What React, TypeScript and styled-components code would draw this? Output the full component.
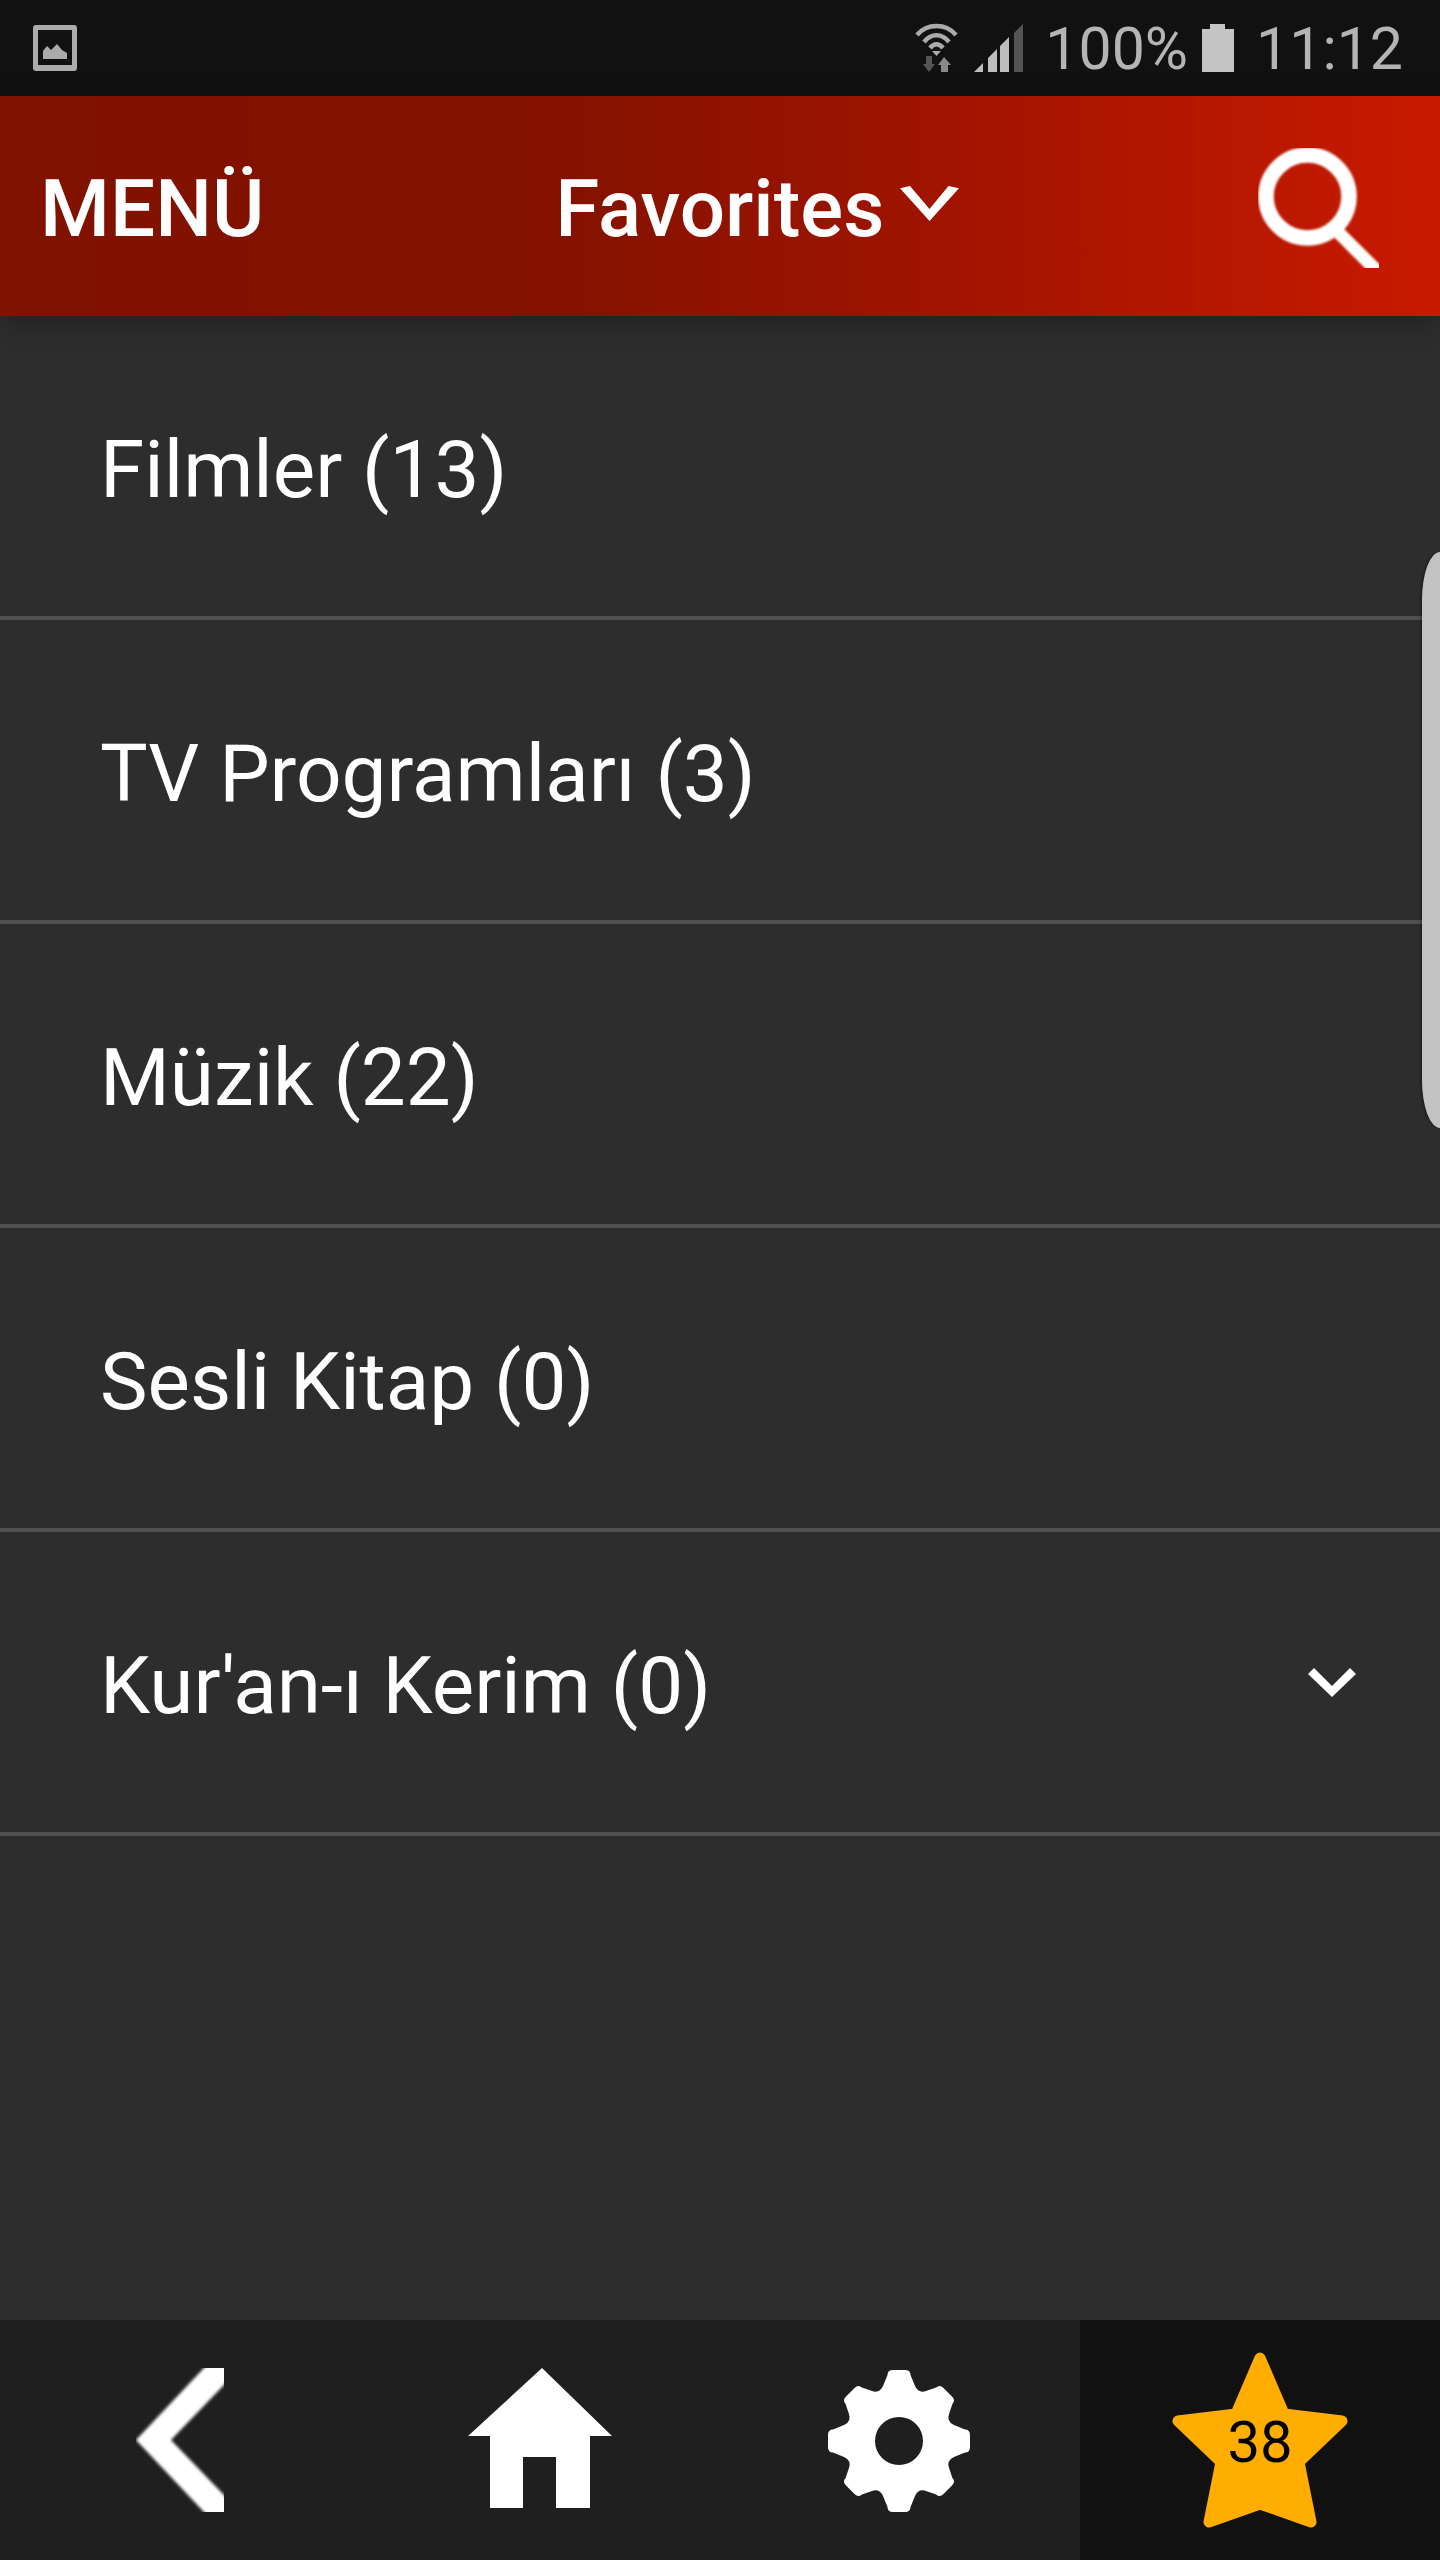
import React from "react";
import styled, { createGlobalStyle } from "styled-components";

const Global = createGlobalStyle`
  html, body { margin: 0; padding: 0; background: #2d2d2d; }
  * { box-sizing: border-box; }
`;

const Screen = styled.div`
  position: relative;
  width: 1440px;
  height: 2560px;
  display: flex;
  flex-direction: column;
  overflow: hidden;
  background: #2d2d2d;
  font-family: Roboto, "Liberation Sans", sans-serif;
  color: #fff;
`;

const StatusBar = styled.div`
  height: 96px;
  flex: none;
  background: #111;
  display: flex;
  align-items: flex-start;
  padding: 23px 37px 0 33px;
  color: #b4b4b4;
`;

const StatusIcon = styled.svg<{ $ml?: number; $mt?: number }>`
  display: block;
  flex: none;
  margin-left: ${(p) => p.$ml ?? 0}px;
  margin-top: ${(p) => p.$mt ?? 0}px;
`;

const StatusSpacer = styled.div`
  flex: 1;
`;

const StatusText = styled.span<{ $ml: number }>`
  font-size: 59px;
  font-weight: 400;
  line-height: 52px;
  margin-left: ${(p) => p.$ml}px;
  white-space: nowrap;
`;

const Header = styled.header`
  position: relative;
  z-index: 1;
  height: 220px;
  flex: none;
  display: flex;
  align-items: center;
  padding: 0 61px 0 40px;
  background: linear-gradient(90deg, #801200 0%, #851200 40%, #a01400 65%, #c81a00 100%);
  box-shadow: 0 6px 26px rgba(0, 0, 0, 0.28);
`;

const HeaderLabel = styled.span`
  font-size: 80px;
  font-weight: 500;
  line-height: 1;
  padding-top: 6px;
  white-space: nowrap;
`;

const TitleGroup = styled.div`
  display: flex;
  align-items: center;
  margin-left: 291px;
  flex: 1;
`;

const HeaderChevron = styled.svg`
  display: block;
  margin-left: 16px;
  margin-top: -5px;
`;

const SearchIcon = styled.svg`
  display: block;
  margin-top: 4px;
`;

const List = styled.main`
  flex: 1;
  display: flex;
  flex-direction: column;
`;

const Row = styled.div`
  height: 304px;
  flex: none;
  display: flex;
  align-items: center;
  justify-content: space-between;
  padding: 0 84px 0 100px;
  border-bottom: 4px solid #505050;
`;

const RowLabel = styled.span`
  font-size: 80px;
  font-weight: 400;
  line-height: 1;
  padding-top: 7px;
  white-space: nowrap;
`;

const EdgeHandle = styled.div`
  position: absolute;
  right: 0;
  top: 552px;
  width: 18px;
  height: 576px;
  background: #c2c2c2;
  border-radius: 18px 0 0 18px / 48px 0 0 48px;
  box-shadow: -2px 0 2px rgba(0, 0, 0, 0.25);
`;

const BottomNav = styled.nav`
  height: 240px;
  flex: none;
  display: grid;
  grid-template-columns: repeat(4, 360px);
  background: #1f1f1f;
`;

const NavCell = styled.div<{ $active?: boolean }>`
  position: relative;
  display: flex;
  align-items: center;
  justify-content: center;
  background: ${(p) => (p.$active ? "#111" : "transparent")};
`;

const NavIcon = styled.svg<{ $ml?: number; $mt?: number }>`
  display: block;
  margin-left: ${(p) => p.$ml ?? 0}px;
  margin-top: ${(p) => p.$mt ?? 0}px;
`;

const StarCount = styled.span`
  position: absolute;
  left: 0;
  right: 0;
  top: 88px;
  text-align: center;
  font-size: 58px;
  line-height: 68px;
  color: #000;
`;

function gearPath(): string {
  const rad = (d: number) => (d * Math.PI) / 180;
  const pt = (r: number, a: number, off: number) => {
    const c = Math.cos(rad(a));
    const s = Math.sin(rad(a));
    return `${(75 + r * c - off * s).toFixed(1)} ${(75 + r * s + off * c).toFixed(1)}`;
  };
  let d = "";
  for (let i = 0; i < 8; i++) {
    const a = i * 45 - 90;
    const tip = i % 2 === 0 ? 71 : 69;
    const start = pt(55, a, -16);
    d += i === 0 ? `M${start}` : `Q${pt(51, a - 22.5, 0)} ${start}`;
    d += `L${pt(tip - 5, a, -11.5)}Q${pt(tip, a, -11.5)} ${pt(tip, a, -6)}`;
    d += `L${pt(tip, a, 6)}Q${pt(tip, a, 11.5)} ${pt(tip - 5, a, 11.5)}L${pt(55, a, 16)}`;
  }
  d += `Q${pt(51, -112.5, 0)} ${pt(55, -90, -16)}Z`;
  d += "M75 51a24 24 0 1 0 0 48a24 24 0 1 0 0-48Z";
  return d;
}

const items = ["Filmler (13)", "TV Programları (3)", "Müzik (22)", "Sesli Kitap (0)", "Kur'an-ı Kerim (0)"];

export default function App() {
  return (
    <Screen>
      <Global />
      <StatusBar>
        <StatusIcon width="44" height="46" viewBox="0 0 44 46" $mt={2}>
          <path
            fillRule="evenodd"
            fill="#ababab"
            d="M3 0h38a3 3 0 0 1 3 3v40a3 3 0 0 1-3 3H3a3 3 0 0 1-3-3V3a3 3 0 0 1 3-3ZM5 5v35h34V5Z"
          />
          <path fill="#ababab" d="M10 34V26l4-5 4 4 6-6 5 6 5 3v6Z" />
        </StatusIcon>
        <StatusSpacer />
        <StatusIcon width="43" height="49" viewBox="0 0 43 49">
          <g fill="none" stroke="#ababab" strokeWidth="4.5">
            <path d="M2 12C12 0 31 0 41 12" />
            <path d="M9 19C16 10 27 10 34 19" />
            <path d="M15 25C19 20 24 20 28 25" />
          </g>
          <path fill="#ababab" d="M17 28h9l-4.500 5Z" />
          <path fill="#555" d="M11 33h6v8h3l-6 8-6-8h3Z" />
          <path fill="#8a8a8a" d="M29 34l7 8h-3v7h-7v-7h-3Z" />
        </StatusIcon>
        <StatusIcon width="49" height="48" viewBox="0 0 49 48" $ml={16} $mt={1}>
          <path fill="#bdbdbd" d="M0 48l9-9v9ZM14 34l9-9v23h-9ZM26 22l9-9v35h-9Z" />
          <path fill="#555" d="M40 9l9-9v48h-9Z" />
        </StatusIcon>
        <StatusText $ml={22}>100%</StatusText>
        <StatusIcon width="32" height="48" viewBox="0 0 32 48" $ml={14} $mt={1}>
          <path fill="#c4c4c4" d="M8 0h15v5h9v43H0V5h8Z" />
        </StatusIcon>
        <StatusText $ml={22}>11:12</StatusText>
      </StatusBar>

      <Header>
        <HeaderLabel>MENÜ</HeaderLabel>
        <TitleGroup>
          <HeaderLabel>Favorites</HeaderLabel>
          <HeaderChevron width="59" height="35" viewBox="0 0 59 35">
            <path fill="#fff" d="M0 2.300L10 0l19.500 23L48.500 0 59 2.300 29.500 35Z" />
          </HeaderChevron>
        </TitleGroup>
        <SearchIcon width="121" height="120" viewBox="0 0 121 120">
          <defs>
            <filter id="soft" x="-20%" y="-20%" width="140%" height="140%">
              <feGaussianBlur stdDeviation="0.9" />
            </filter>
          </defs>
          <g fill="none" stroke="#fff" filter="url(#soft)">
            <circle cx="49.500" cy="48.500" r="41.500" strokeWidth="15.500" />
            <path d="M80 84L130 134" strokeWidth="13" />
          </g>
        </SearchIcon>
      </Header>

      <List>
        {items.map((item, i) => (
          <Row key={item}>
            <RowLabel>{item}</RowLabel>
            {i === items.length - 1 && (
              <svg width="48" height="29" viewBox="0 0 48 29">
                <path fill="#fff" d="M0 6l6-6 18 18L42 0l6 6-24 23Z" />
              </svg>
            )}
          </Row>
        ))}
      </List>

      <EdgeHandle />

      <BottomNav>
        <NavCell>
          <NavIcon width="88" height="144" viewBox="0 0 88 144">
            <defs>
              <filter id="softBack" x="-20%" y="-20%" width="140%" height="140%">
                <feGaussianBlur stdDeviation="1.400" />
              </filter>
            </defs>
            <path
              fill="#fff"
              filter="url(#softBack)"
              d="M0 72L75.500-8H98V6.600L35 72l63 65.400V152H75.500Z"
            />
          </NavIcon>
        </NavCell>
        <NavCell>
          <NavIcon width="144" height="140" viewBox="0 0 144 140" $mt={-4}>
            <path fill="#fff" fillRule="evenodd" d="M74 0l70 68h-22v72H22V68H0ZM55 89v51h33V89Z" />
          </NavIcon>
        </NavCell>
        <NavCell>
          <NavIcon width="150" height="150" viewBox="0 0 150 150" $ml={-2} $mt={2}>
            <path fill="#fff" fillRule="evenodd" d={gearPath()} />
          </NavIcon>
        </NavCell>
        <NavCell $active>
          <NavIcon width="176" height="176" viewBox="0 0 176 176">
            <path
              fill="#ffae00"
              stroke="#ffae00"
              strokeWidth="11"
              strokeLinejoin="round"
              d="M88 6L112 62L170 69L127 110L139 170L88 152L37 170L49 110L6 69L64 62Z"
            />
          </NavIcon>
          <StarCount>38</StarCount>
        </NavCell>
      </BottomNav>
    </Screen>
  );
}
